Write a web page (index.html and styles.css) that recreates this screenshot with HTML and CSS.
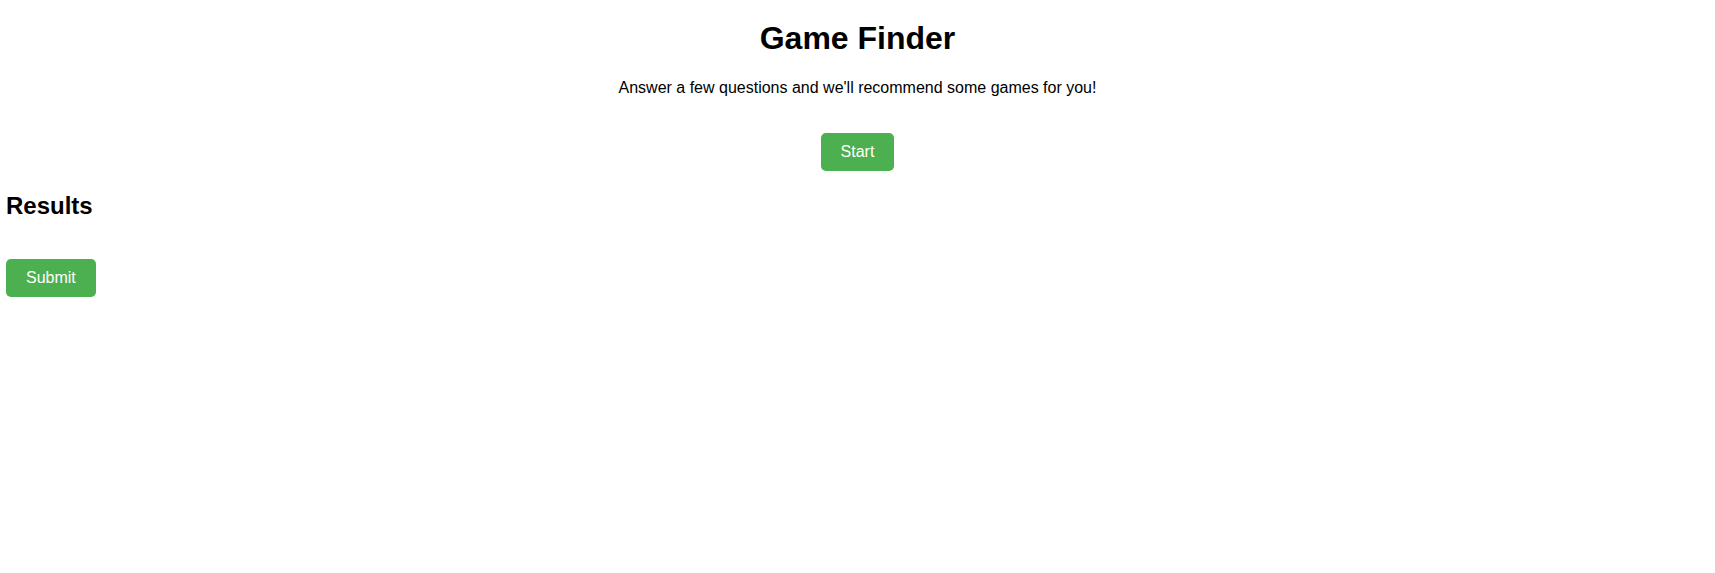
FILE: index.html
```html
<!DOCTYPE html>
<html>
<head>
<meta charset="utf-8">
<title>Game Finder</title>
<link rel="stylesheet" href="styles.css">
</head>
<body>
<header class="intro">
  <h1 class="title">Game Finder</h1>
  <p class="lead">Answer a few questions and we'll recommend some games for you!</p>
  <div class="start-row"><button class="btn">Start</button></div>
</header>
<section class="results">
  <h2 class="results-title">Results</h2>
  <div class="results-list"></div>
  <button class="btn">Submit</button>
</section>
</body>
</html>
```
FILE: styles.css
```css
html, body {
  background: #fff;
}
body {
  margin: 0;
  padding: 0 6px;
  font-family: "Liberation Sans", Arial, sans-serif;
  color: #000;
}
.intro {
  text-align: center;
}
.title {
  font-size: 32px;
  font-weight: bold;
  margin: 19.5px 0 22.5px;
}
.lead {
  font-size: 16px;
  margin: 0;
}
.start-row {
  margin-top: 36px;
}
.btn {
  background: #4CAF50;
  color: #fff;
  border: none;
  border-radius: 5px;
  padding: 10px 20px;
  font-family: "Liberation Sans", Arial, sans-serif;
  font-size: 16px;
  line-height: 18px;
  cursor: pointer;
}
.results-title {
  font-size: 24px;
  font-weight: bold;
  margin: 21px 0 19px;
}
.results-list {
  height: 20px;
}
```
